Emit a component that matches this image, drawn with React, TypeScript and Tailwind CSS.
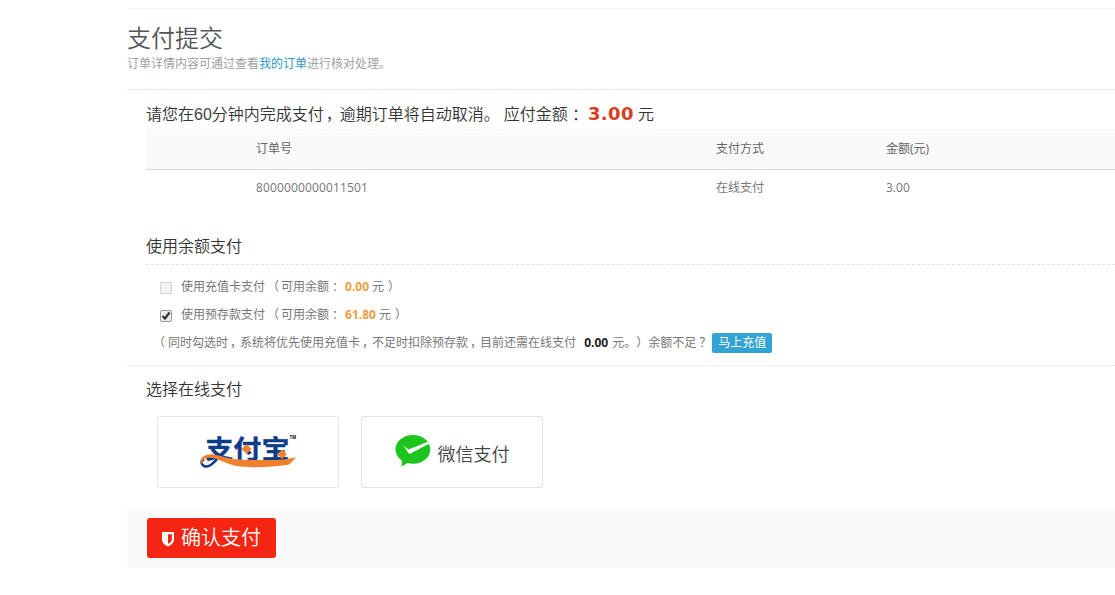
import { ReactNode, useState } from 'react';

// full width colon, centered in its cell
function Colon() {
    return <span className="relative top-px font-['Noto_Sans_CJK_TC',sans-serif]">：</span>;
}

function Comma() {
    return <span className="relative left-0.5">，</span>;
}

function AlipayLogo() {
    return (
        <svg width="98" height="58" viewBox="0 -10 98 58" role="img" aria-label="支付宝">
            <g fill="#0d3c88" fontFamily="'Noto Sans CJK SC', sans-serif" fontWeight="700" fontSize="27" stroke="#0d3c88" strokeWidth=".4" transform="translate(0 2) scale(1.040 .93)">
                <text x="6" y="24.500">支</text>
                <text x="33" y="24.500">付</text>
                <text x="60" y="24.500">宝</text>
            </g>
            <path d="M20 23C15 31 9 35 5 33C2 31.500 1.500 28 5 26" fill="none" stroke="#0d3c88" strokeWidth="2.600" />
            <path d="M1.500 29.500C1 23.500 8 20.500 15 21.500C23 23 30 26 40 26.500C55 27 75 27.500 84 26.500L97 24.500L90 31.500C72 34.800 46 35 35 32.500C25 29.500 17 24.500 9 24.500C5 25 3.200 27 3.500 31Z" fill="#f0802b" />
            <path d="M47.500 11L52.500 16L47.500 21L42.500 16ZM83 16.500L87.800 21.300L83 26L78.200 21.300Z" fill="#f0802b" />
            <text x="90.500" y="6" fontSize="4.500" fontWeight="700" fontFamily="'Liberation Sans', sans-serif">TM</text>
        </svg>
    );
}

function WechatLogo() {
    return (
        <svg width="36" height="34" viewBox="0 0 36 34" className="-mt-0.5">
            <path d="M18 1C27.700 1 35.300 7.300 35.300 15.300C35.300 23.500 27.700 29.800 18 29.800C16 29.800 14.200 29.600 12.500 29L6.500 32.500L7 26.500C3 23.800 .5 19.800 .5 15.300C.5 7.300 8.300 1 18 1Z" fill="#1dc41d" />
            <path d="M8.500 11.500L13.500 15.500L33.500 7.500L34.500 9.500L15.500 19.500Q14 20.300 13 18.500Z" fill="#fff" />
        </svg>
    );
}

function SectionTitle({ children }: { children: ReactNode }) {
    return <h3 className="h-6 text-[16px] leading-6 font-[350] text-[#333]">{children}</h3>;
}

type BalanceProps = {
    label: string;
    amount: string;
    checked: boolean;
    disabled?: boolean;
    onChange?: () => void;
};

function BalanceRow({ label, amount, checked, disabled, onChange }: BalanceProps) {
    return (
        <label className="flex h-7 items-center">
            <button
                type="button"
                role="checkbox"
                aria-checked={checked}
                disabled={disabled}
                onClick={onChange}
                className={`mt-0.5 mr-[9px] flex size-3 items-center justify-center rounded-[2px] border ${disabled ? 'border-[#d2d2d2] bg-[#f2f2f2]' : 'border-[#9a9a9a] bg-[#eee]'}`}
            >
                {checked && (
                    <svg width="10" height="10" viewBox="0 0 10 10" className="shrink-0">
                        <path d="M1.500 5L4 7.500L8.500 1.500" fill="none" stroke="#333" strokeWidth="2.300" />
                    </svg>
                )}
            </button>
            <span className="-mt-0.5 whitespace-pre">
                {label}
                <span className="mr-0.5 ml-0.5">（</span>
                <span>可用余额</span>
                <Colon />
                <b className="mr-[3px] ml-1 font-bold text-[#ec9f40]">{amount}</b>
                元
                <span className="ml-1">）</span>
            </span>
        </label>
    );
}

export default function App() {
    const [useDeposit, setUseDeposit] = useState(true);

    return (
        <div className="h-[595px] overflow-hidden bg-white pt-2 pl-[127px] font-['Open_Sans','Noto_Sans_CJK_SC',sans-serif] text-[12px] text-[#777] [text-spacing-trim:space-all]">
            <header className="h-[82px] border-t border-b border-t-[#f3f3f3] border-b-[#eaeaea] pt-[13px]">
                <h1 className="h-[33px] text-[24px] leading-8 font-[350] text-[#555]">支付提交</h1>
                <p className="h-[18px] leading-[18px] text-[#a0a0a0]">
                    订单详情内容可通过查看
                    <a href="#" className="text-[#2a95c5]">我的订单</a>
                    进行核对处理。
                </p>
            </header>

            <main className="pl-[19px]">
                <p className="flex h-[39px] items-center pt-[9px] text-[16px] font-[350] whitespace-pre text-[#333]">
                    <span>请您在<span className="font-['Liberation_Sans'] text-[#444]">60</span>分钟内完成支付<Comma />逾期订单将自动取消。</span>
                    <span className="ml-1 -mt-px">应付金额<Colon /></span>
                    <strong className="ml-1 -mt-0.5 w-[50px] font-['DejaVu_Sans',sans-serif] text-[18px] font-bold tracking-[0.4px] text-[#d8401c]">3.00</strong>
                    <span>元</span>
                </p>

                <div className="grid h-[41px] grid-cols-[110px_460px_170px_1fr] items-center border-b border-[#d8d8d8] bg-[#fafafa] text-[#666]">
                    <span />
                    <span>订单号</span>
                    <span>支付方式</span>
                    <span>金额(元)</span>
                </div>
                <div className="grid h-9 grid-cols-[110px_460px_170px_1fr] items-center">
                    <span />
                    <span className="tracking-[0.14px]">8000000000011501</span>
                    <span>在线支付</span>
                    <span>3.00</span>
                </div>

                <section className="mt-7">
                    <SectionTitle>使用余额支付</SectionTitle>
                    <div className="mt-[6px] border-t border-dashed border-[#e3e3e3] pt-2 pl-[14px]">
                        <BalanceRow label="使用充值卡支付" amount="0.00" checked={false} disabled />
                        <BalanceRow
                            label="使用预存款支付"
                            amount="61.80"
                            checked={useDeposit}
                            onChange={() => setUseDeposit(!useDeposit)}
                        />
                        <div className="flex h-7 items-center whitespace-pre">
                            <span className="mr-[3px] -ml-[7px]">（</span>
                            <span>同时勾选时<Comma />系统将优先使用充值卡<Comma />不足时扣除预存款<Comma />目前还需在线支付</span>
                            <b className="mr-1 ml-2 font-bold text-[#222]">0.00</b>
                            <span>元。）余额不足<span className="relative left-[3px]">？</span></span>
                            <a href="#" className="ml-1 flex h-5 w-[60px] items-center justify-center rounded-[2px] bg-[#31a3d5] text-white">马上充值</a>
                        </div>
                    </div>
                </section>
            </main>

            <section className="mt-2 border-t border-dotted border-[#e3e3e3] pt-[11px] pl-[19px]">
                <SectionTitle>选择在线支付</SectionTitle>
                <div className="mt-[15px] ml-[11px] flex gap-[22px]">
                    <button type="button" className="flex h-[72px] w-[182px] items-center justify-center rounded-[3px] border border-[#e3e3e3]">
                        <AlipayLogo />
                    </button>
                    <button type="button" className="flex h-[72px] w-[182px] items-center justify-center gap-[7px] rounded-[3px] border border-[#e3e3e3] text-[18px] text-[#444]">
                        <WechatLogo />
                        <span className="pt-1 font-[350]">微信支付</span>
                    </button>
                </div>
            </section>

            <footer className="mt-5 flex h-[60px] items-center bg-[#fafafa] pl-5">
                <button type="button" className="flex h-10 w-[129px] items-center rounded-[3px] bg-[#f42613] pl-[15px] text-[20px] font-[350] text-white">
                    <svg width="12" height="15" viewBox="0 0 12 15" className="mt-0.5 mr-[7px]">
                        <path fillRule="evenodd" d="M.7 0H11.300Q12 0 12 .7V7.500C12 10.700 9.500 13 6 14.500C2.500 13 0 10.700 0 7.500V.7Q0 0 .7 0ZM6 2.200V12C8.400 10.800 9.900 9.300 9.900 7.500V2.200Z" fill="#fff" />
                    </svg>
                    确认支付
                </button>
            </footer>
        </div>
    );
}
